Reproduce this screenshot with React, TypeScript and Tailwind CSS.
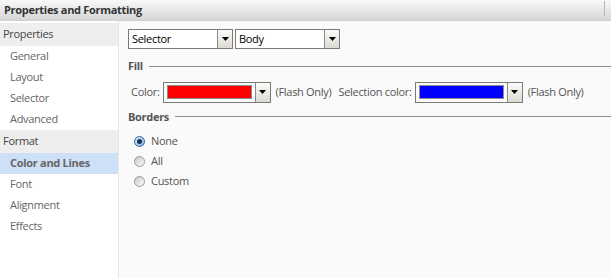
import { useState } from "react";

const font = { fontFamily: '"Open Sans", "Noto Sans", sans-serif' };

const Arrow = () => (
  <div className="flex h-full w-[15px] items-center justify-center border-l border-[#8a8a8a] bg-gradient-to-b from-[#fbfbf8] to-[#dcdad2]">
    <svg width="7" height="4" viewBox="0 0 7 4">
      <path d="M0 0h7L3.5 4z" fill="#000" />
    </svg>
  </div>
);

const Select = ({ value, width }: { value: string; width: string }) => (
  <div className={`flex h-[20px] ${width} items-center border border-[#7a7a7a] bg-white`}>
    <span className="flex-1 pl-[3px] text-[11px] text-black">{value}</span>
    <Arrow />
  </div>
);

const ColorPick = ({ color }: { color: string }) => (
  <div className="flex h-[21px] w-[108px] items-center border border-[#7a7a7a] bg-[#fafafa]">
    <div className="flex-1 px-[3px]">
      <div className={`h-[14px] border border-[#8c8c8c] ${color}`} />
    </div>
    <Arrow />
  </div>
);

const Radio = ({ checked }: { checked: boolean }) =>
  checked ? (
    <span className="flex h-[11px] w-[11px] items-center justify-center rounded-full border border-[#2b63a8] bg-gradient-to-br from-[#dce9f7] to-[#8fb3dc]">
      <span className="h-[5px] w-[5px] rounded-full bg-[#10335e]" />
    </span>
  ) : (
    <span className="h-[11px] w-[11px] rounded-full border border-[#9a9a9a] bg-gradient-to-br from-[#c8c8c8] to-[#fdfdfd]" />
  );

const Section = ({ title }: { title: string }) => (
  <div className="flex items-center gap-[6px]">
    <span className="text-[11px] font-bold text-[#555]">{title}</span>
    <div className="h-px flex-1 bg-[#8e8e8e]" />
  </div>
);

export default function App() {
  const [border, setBorder] = useState("None");
  const [active, setActive] = useState("Color and Lines");

  const groups = [
    { name: "Properties", items: ["General", "Layout", "Selector", "Advanced"] },
    { name: "Format", items: ["Color and Lines", "Font", "Alignment", "Effects"] },
  ];

  return (
    <div className="flex h-[278px] w-[611px] flex-col whitespace-nowrap bg-[#fafafa] tracking-[-0.3px]" style={font}>
      {/* Title bar */}
      <div className="relative flex h-[21px] items-center border-b border-[#cfcfcf] bg-gradient-to-b from-[#f9f9f9] to-[#d6d6d6] pl-[4px]">
        <span className="text-[11px] font-bold text-[#333]">Properties and Formatting</span>
        <div className="absolute right-[6px] top-[1px] h-[15px] w-px bg-[#b5b5b5]" />
      </div>

      <div className="flex flex-1">
        {/* Sidebar */}
        <div className="flex w-[119px] flex-col border-r border-[#e6e6e6] bg-white pt-[2px]">
          {groups.map((g) => (
            <div key={g.name} className="flex flex-col">
              <div className="flex h-[23px] items-center bg-[#eeeeee] pl-[3px] text-[11px] text-[#444]">{g.name}</div>
              {g.items.map((it) => (
                <div
                  key={it}
                  onClick={() => setActive(it)}
                  className={`flex h-[21px] cursor-pointer items-center pl-[10px] text-[11px] ${
                    active === it ? "bg-[#cde0f7] font-bold text-[#666]" : "text-[#666]"
                  }`}
                >
                  {it}
                </div>
              ))}
            </div>
          ))}
        </div>

        {/* Content */}
        <div className="flex flex-1 flex-col pl-[9px] pt-[8px]">
          <div className="flex gap-[2px]">
            <Select value="Selector" width="w-[105px]" />
            <Select value="Body" width="w-[105px]" />
          </div>

          <div className="mt-[9px]">
            <Section title="Fill" />
          </div>

          <div className="mt-[7px] flex items-center pl-[3px] text-[11px] text-[#555]">
            <span className="mr-[3px]">Color:</span>
            <ColorPick color="bg-[#ff0000]" />
            <span className="ml-[5px]">(Flash Only)</span>
            <span className="ml-[7px] mr-[3px]">Selection color:</span>
            <ColorPick color="bg-[#0000ff]" />
            <span className="ml-[5px]">(Flash Only)</span>
          </div>

          <div className="mt-[6px]">
            <Section title="Borders" />
          </div>

          <div className="mt-[6px] flex flex-col pl-[6px]">
            {["None", "All", "Custom"].map((o) => (
              <div
                key={o}
                onClick={() => setBorder(o)}
                className="flex h-[20px] cursor-pointer items-center gap-[6px] text-[11px] text-[#555]"
              >
                <Radio checked={border === o} />
                <span>{o}</span>
              </div>
            ))}
          </div>
        </div>
      </div>
    </div>
  );
}
